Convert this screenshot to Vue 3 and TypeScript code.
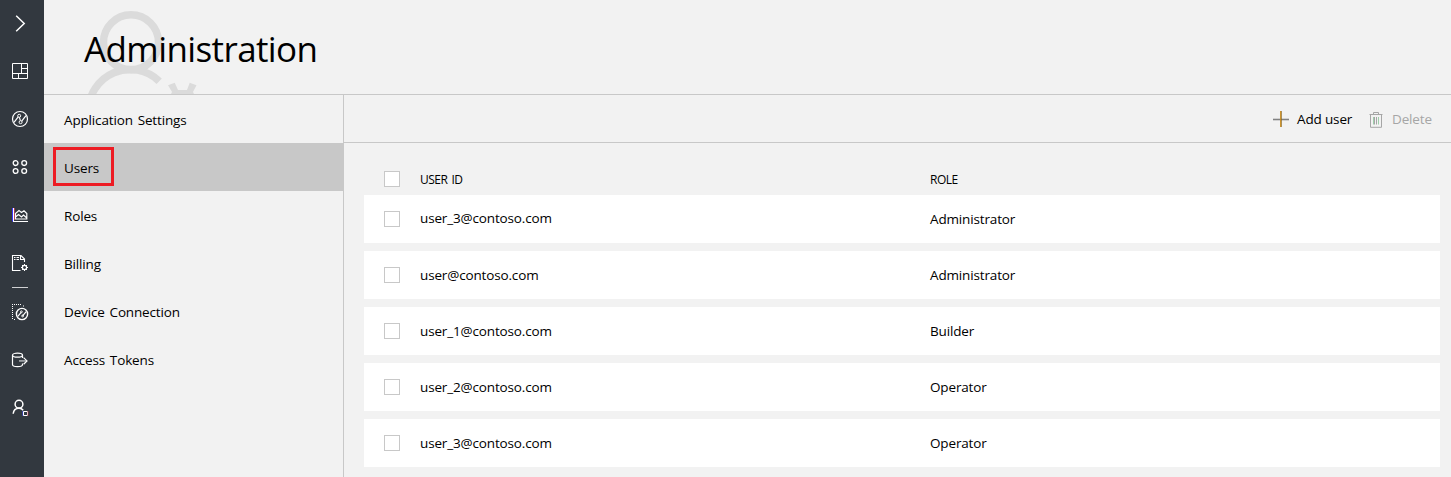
<script setup lang="ts">
interface NavItem {
  label: string
  active?: boolean
}

interface UserRow {
  id: string
  role: string
}

const navItems: NavItem[] = [
  { label: 'Application Settings' },
  { label: 'Users', active: true },
  { label: 'Roles' },
  { label: 'Billing' },
  { label: 'Device Connection' },
  { label: 'Access Tokens' },
]

const users: UserRow[] = [
  { id: 'user_3@contoso.com', role: 'Administrator' },
  { id: 'user@contoso.com', role: 'Administrator' },
  { id: 'user_1@contoso.com', role: 'Builder' },
  { id: 'user_2@contoso.com', role: 'Operator' },
  { id: 'user_3@contoso.com', role: 'Operator' },
]
</script>

<template>
  <div class="app">
    <aside class="rail">
      <div class="rail-item">
        <svg viewBox="0 0 18 18"><path d="M5.2 .8L13.2 8.5L5.2 16.2" stroke-width="1.5" /></svg>
      </div>
      <div class="rail-item">
        <svg viewBox="0 0 18 18">
          <path d="M1.5 1.5H16.5V16.5H1.5ZM10.5 1.5V11.5M1.5 11.5H16.5M10.5 6.5H16.5M7.5 11.5V16.5" />
        </svg>
      </div>
      <div class="rail-item">
        <svg viewBox="0 0 18 18">
          <circle cx="9" cy="9" r="7.5" stroke-width="1.2" />
          <circle cx="8.2" cy="5.8" r="1.5" />
          <circle cx="9.6" cy="12.2" r="1.5" />
          <path d="M7.2 6.9L3 12.4M8.4 7.3L9.4 10.7M10.7 11.1L15 5.6" stroke-width="1.2" />
        </svg>
      </div>
      <div class="rail-item">
        <svg viewBox="0 0 18 18" stroke-width="1.3">
          <circle cx="4.6" cy="5.1" r="2.4" /><circle cx="13.2" cy="5.1" r="2.4" />
          <circle cx="4.6" cy="13" r="2.4" /><circle cx="13.2" cy="13" r="2.4" />
        </svg>
      </div>
      <div class="rail-item">
        <svg viewBox="0 0 18 18">
          <path d="M1.5 2V15.5" stroke="#3c32ff" />
          <path d="M2.5 2V15.5M2 15.5H17" />
          <path d="M3.5 2V14" stroke="#a53755" />
          <path d="M4.5 13V7.5L8 4.5L10.5 6.5L13 4.8L15.8 7.5V13ZM4.5 11L7.5 8.5L10.5 11L12.5 9L15.8 12" stroke-width="1.2" />
        </svg>
      </div>
      <div class="rail-item">
        <svg viewBox="0 0 18 18">
          <path d="M9.5 16.5H1.5V1.5H10L13.5 5V8M9.5 1.5V5.5H13.5" stroke-width="1.1" />
          <path d="M3 3.5H4.5M5.5 3.5H8M3 5.5H4.5M5.5 5.5H8" />
          <circle cx="13.5" cy="13.5" r="2.1" stroke-width="1.2" />
          <path d="M13.5 10V11.3M13.5 15.7V17M10 13.5H11.3M15.7 13.5H17M11 11L12 12M15 15L16 16M11 16L12 15M15 12L16 11" />
        </svg>
      </div>
      <div class="rail-divider"></div>
      <div class="rail-item">
        <svg viewBox="0 0 18 18">
          <path d="M1 1.5H11M1.5 3V17M3 16.5H5M12.5 2.5V4" stroke-dasharray="1 1" />
          <circle cx="11" cy="11" r="5.6" stroke-width="1.4" />
          <path d="M6.8 13.4L10.2 9.4M11.6 12.8L15.2 8.6" stroke-width="1.2" />
          <circle cx="10.4" cy="8.8" r=".9" /><circle cx="11.6" cy="13" r=".9" />
        </svg>
      </div>
      <div class="rail-item">
        <svg viewBox="0 0 18 18" class="low">
          <ellipse cx="6.5" cy="3.2" rx="5" ry="2" stroke-width="1.2" />
          <path d="M1.5 3.2V12.6C1.5 13.8 3.7 14.7 6.5 14.7S11.5 13.8 11.5 12.6V11.5M11.5 3.2V6" stroke-width="1.2" />
          <path d="M8 8.9H15" stroke="#a8acaf" stroke-width="1.6" />
          <path d="M12.6 5.6L16 8.9L12.6 12.2" stroke-width="1.2" />
        </svg>
      </div>
      <div class="rail-item">
        <svg viewBox="0 0 18 18">
          <circle cx="8" cy="5.2" r="3.9" stroke-width="1.5" />
          <path d="M2.2 14.8C2.5 11.4 4.8 9.2 8 9.2C9.8 9.2 11.2 9.9 12.2 11.2" stroke-width="1.5" />
          <path d="M12 12V17" stroke="#3c46ff" />
          <path d="M12.5 12.5H16.5V16.5H12.5Z" />
          <path d="M17 12V17" stroke="#a52840" stroke-width=".7" />
        </svg>
      </div>
    </aside>

    <div class="page">
      <header class="header">
        <svg class="watermark" viewBox="0 0 130 94">
          <circle cx="51" cy="42.3" r="27.5" />
          <path d="M9.3 112A41.7 41.7 0 0 1 80 82" transform="translate(-.8 -.8)" />
          <path class="solid" d="M88 85.2L94.7 82.7L98 90H107L109.7 82.7L116.5 85.2L113 92L114 94H91L92 92Z" />
        </svg>
        <h1>Administration</h1>
      </header>

      <div class="body">
        <nav class="nav">
          <a v-for="item in navItems" :key="item.label" class="nav-item" :class="{ active: item.active }">
            <span class="nav-label">{{ item.label }}</span>
          </a>
        </nav>

        <main class="content">
          <div class="toolbar">
            <button class="action add">
              <svg viewBox="0 0 18 18">
                <path d="M1 9.5H17" stroke="#828282" stroke-width="1.6" />
                <path d="M8.7 1V17" stroke="#c98a18" stroke-width="1.2" />
                <path d="M9.5 1V17" stroke="#806020" stroke-width=".6" />
              </svg>
              <span>Add user</span>
            </button>
            <button class="action delete">
              <svg viewBox="0 0 18 18">
                <path d="M2.5 4.5H15.5M6.5 4.5V2.5H11.5V4.5M3.5 4.5V17.3H14.5V4.5" stroke="#a6a6a6" />
                <path d="M6.5 7V14.5M11.5 7V14.5" stroke="#9fceab" />
                <path d="M7.5 7V14.5M9.5 7V14.5" stroke="#a6a6a6" />
              </svg>
              <span>Delete</span>
            </button>
          </div>

          <div class="table">
            <div class="row head">
              <i class="check"></i>
              <span class="uid">USER ID</span>
              <span class="role">ROLE</span>
            </div>
            <div v-for="(user, index) in users" :key="index" class="row entry">
              <i class="check"></i>
              <span class="uid">{{ user.id }}</span>
              <span class="role">{{ user.role }}</span>
            </div>
          </div>
        </main>
      </div>
    </div>
  </div>
</template>

<style>
body {
  margin: 0;
  overflow: hidden;
}
</style>

<style scoped>
.app {
  display: flex;
  width: 100vw;
  height: 100vh;
  overflow: hidden;
  background: #f2f2f2;
  color: #000;
  font-family: "Open Sans", "Noto Sans", sans-serif;
  font-size: 13.5px;
  letter-spacing: -0.15px;
}
.app * {
  box-sizing: border-box;
}
svg {
  display: block;
  flex: none;
  fill: none;
}
.rail {
  display: flex;
  flex: none;
  flex-direction: column;
  width: 44px;
  background: #32383f;
}
.rail-item {
  display: flex;
  align-items: center;
  height: 48px;
  padding-left: 11px;
}
.rail-item:first-child {
  height: 47px;
}
.rail-item svg {
  width: 18px;
  height: 18px;
  stroke: #fff;
}
.rail-item .low {
  margin-top: 2px;
}
.rail-divider {
  flex: none;
  width: 16px;
  height: 1px;
  margin-left: 12px;
  background: #d0d1d3;
}
.page {
  display: flex;
  flex: 1;
  flex-direction: column;
  min-width: 0;
}
.header {
  position: relative;
  flex: none;
  height: 95px;
  border-bottom: 1px solid #c8c8c8;
}
.watermark {
  position: absolute;
  top: 0;
  left: 36px;
  width: 130px;
  height: 94px;
  stroke: #dbdbdb;
  stroke-width: 7.5;
}
.watermark .solid {
  fill: #dbdbdb;
  stroke: none;
}
h1 {
  position: relative;
  width: max-content;
  margin: 0;
  padding: 25px 0 0 40px;
  font-size: 35px;
  font-weight: 400;
  line-height: 48px;
  letter-spacing: -0.6px;
}
.body {
  display: flex;
  flex: 1;
  min-height: 0;
}
.nav {
  flex: none;
  width: 300px;
  border-right: 1px solid #c8c8c8;
  word-spacing: 1.5px;
}
.nav-item {
  display: flex;
  align-items: flex-start;
  height: 48px;
  padding: 4px 0 0 9px;
}
.nav-label {
  height: 39px;
  padding: 1px 0 0 8px;
  border: 3px solid transparent;
  line-height: 34px;
  white-space: nowrap;
}
.active {
  background: #c8c8c8;
}
.active .nav-label {
  width: 61px;
  border-color: #ed1c24;
}
.content {
  flex: 1;
  min-width: 0;
}
.toolbar {
  display: flex;
  justify-content: flex-end;
  height: 48px;
  padding-right: 18px;
  border-bottom: 1px solid #c8c8c8;
}
.action {
  display: flex;
  align-items: center;
  padding: 0;
  border: 0;
  background: none;
  color: #000;
  font: inherit;
  letter-spacing: inherit;
}
.action svg {
  width: 18px;
  height: 18px;
}
.add {
  gap: 7px;
  width: 95px;
}
.delete {
  gap: 7px;
  width: 66px;
  color: #a6a6a6;
}
.table {
  display: flex;
  flex-direction: column;
  gap: 8px;
  padding: 20px 11px 0 20px;
}
.row {
  display: grid;
  flex: none;
  grid-template-columns: 36px 510px 1fr;
  align-items: center;
  height: 48px;
  padding-left: 20px;
}
.head {
  height: 32px;
  margin-bottom: -8px;
  font-size: 12px;
  letter-spacing: -0.5px;
  word-spacing: 1.5px;
}
.entry {
  background: #fff;
}
.head + .entry .uid {
  margin-bottom: 2px;
}
.check {
  width: 16px;
  height: 16px;
  border: 1px solid #c8c8c8;
  background: #fff;
}
</style>
